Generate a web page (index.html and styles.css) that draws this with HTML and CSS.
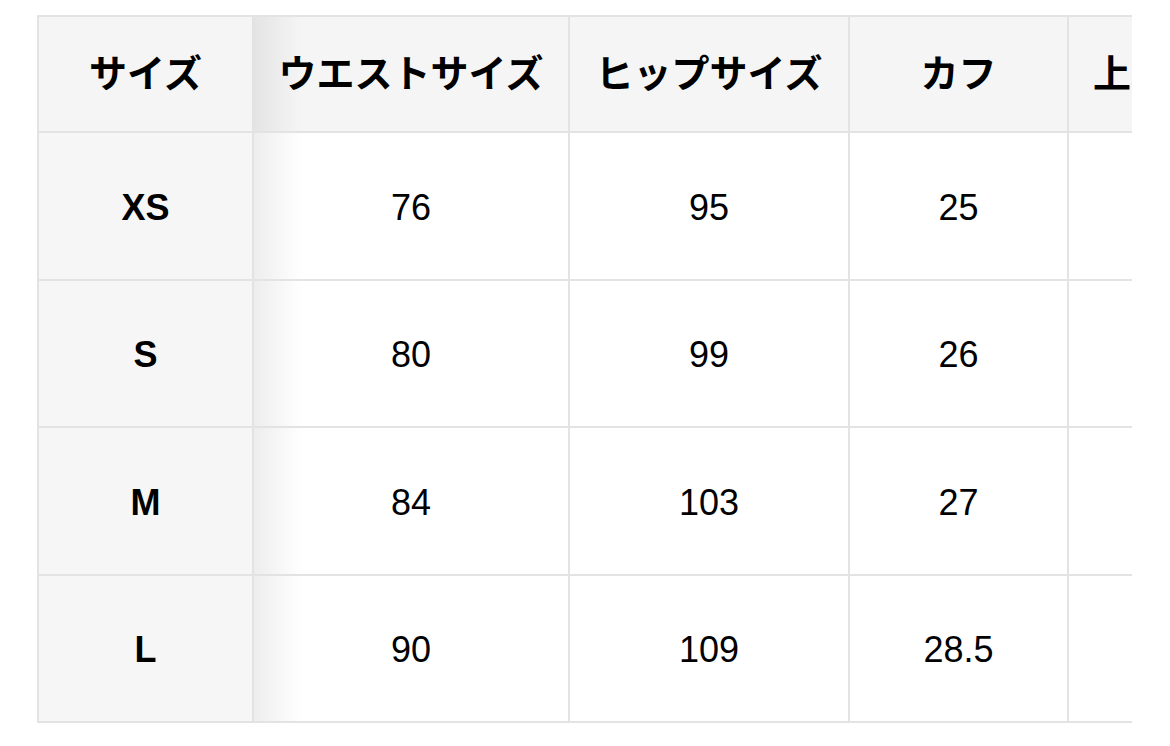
FILE: index.html
```html
<!DOCTYPE html>
<html lang="ja">
<head>
<meta charset="utf-8">
<title>サイズ表</title>
<link rel="stylesheet" href="styles.css">
</head>
<body>
<div class="scroll">
  <div class="grid">
    <div class="cell head sticky">サイズ</div>
    <div class="cell head">ウエストサイズ</div>
    <div class="cell head">ヒップサイズ</div>
    <div class="cell head">カフ</div>
    <div class="cell head">上着丈</div>

    <div class="cell side sticky">XS</div>
    <div class="cell">76</div>
    <div class="cell">95</div>
    <div class="cell">25</div>
    <div class="cell"></div>

    <div class="cell side sticky">S</div>
    <div class="cell">80</div>
    <div class="cell">99</div>
    <div class="cell">26</div>
    <div class="cell"></div>

    <div class="cell side sticky">M</div>
    <div class="cell">84</div>
    <div class="cell">103</div>
    <div class="cell">27</div>
    <div class="cell"></div>

    <div class="cell side sticky">L</div>
    <div class="cell">90</div>
    <div class="cell">109</div>
    <div class="cell">28.5</div>
    <div class="cell"></div>
  </div>
</div>
</body>
</html>
```

FILE: styles.css
```css
html, body {
  margin: 0;
  padding: 0;
  background: #ffffff;
}

body {
  font-family: "Liberation Sans", Arial, "Noto Sans CJK JP", sans-serif;
  color: #000000;
}

.scroll {
  margin: 15px 0 0 37px;
  width: 1095px;
  overflow: hidden;
}

.grid {
  display: grid;
  width: max-content;
  grid-template-columns: 213px 314px 278px 217px 162px;
  grid-template-rows: 114px repeat(4, 145.5px);
  gap: 2px;
  padding: 2px;
  background: #e3e3e3;
}

.cell {
  display: flex;
  align-items: center;
  justify-content: center;
  background: #ffffff;
  font-size: 36px;
  position: relative;
  white-space: nowrap;
  overflow: hidden;
  padding-top: 4px;
}

.head {
  background: #f5f5f5;
  font-family: "Noto Sans CJK JP", "Liberation Sans", sans-serif;
  font-weight: 700;
  font-size: 38px;
  padding-top: 0;
  padding-bottom: 8px;
}

.side {
  background: #f6f6f6;
  font-weight: 700;
}

.sticky {
  overflow: visible;
  z-index: 2;
}

.sticky::after {
  content: "";
  position: absolute;
  top: 0;
  bottom: 0;
  left: calc(100% + 2px);
  width: 48px;
  background: linear-gradient(to right, rgba(0, 0, 0, 0.07), rgba(0, 0, 0, 0));
  pointer-events: none;
}
```
